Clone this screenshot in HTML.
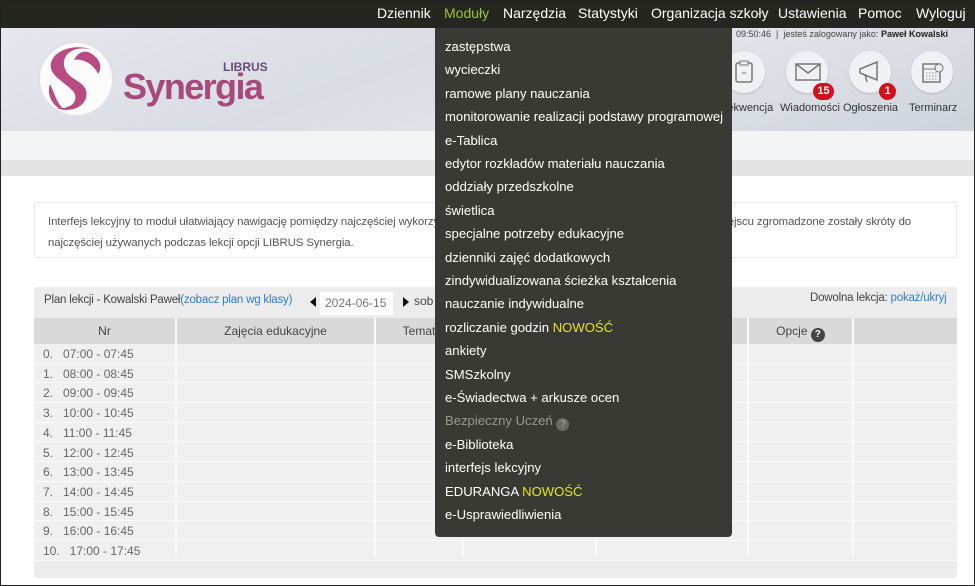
<!DOCTYPE html>
<html><head><meta charset="utf-8">
<style>
*{box-sizing:border-box;margin:0;padding:0}
body{width:975px;height:586px;overflow:hidden;position:relative;font-family:"Liberation Sans",Arial,sans-serif;background:#fff}
.abs{position:absolute}
#top{left:0;top:0;width:975px;height:28px;background:#262621}
#top span{position:absolute;top:5px;color:#fff;font-size:14px}
#hdr{left:0;top:28px;width:975px;height:103px;background:linear-gradient(160deg,#e6e8ee 0%,#d9dce4 40%,#e2e4ea 60%,#cfd3dc 100%)}
#band1{left:0;top:131px;width:975px;height:29px;background:#f3f4f6}
#band2{left:0;top:160px;width:975px;height:16px;background:#e4e4e4}
.ic{width:42px;height:42px;border-radius:50%;background:#f0f1f4;top:51px;box-shadow:0 1px 2px rgba(0,0,0,.15)}
.lbl{font-size:11px;color:#333;top:102px}
.badge{background:#d0101b;color:#fff;font-size:11px;font-weight:bold;border-radius:9px;height:17px;line-height:17px;text-align:center;top:83px}
#info{left:34px;top:202px;width:923px;height:56px;border:1px solid #e6e6e6;border-radius:3px;font-size:11.4px;color:#555;padding:9px 13px;line-height:21px;letter-spacing:-0.1px}
#plan{left:34px;top:287px;width:923px;height:291px;background:#ececec;border-radius:3px}
.row{left:34px;width:923px;height:19.7px;border-bottom:1px solid #fafafa;font-size:12px;color:#666}
.th{top:318px;height:26px;background:#d9d9d9;font-size:12px;color:#444;text-align:center;line-height:26px}
.vl{top:318px;width:2px;height:238px;background:#fafafa}
#dd{left:435px;top:28px;width:297px;height:509px;background:#3a3a35;border-radius:0 0 4px 4px}
#dd div{position:absolute;left:10px;color:#fff;font-size:13.1px;white-space:nowrap}
.new{color:#e4e51b}
#frame{left:0;top:0;width:975px;height:586px;border:1px solid #222;pointer-events:none}
</style></head><body>
<div id="top" class="abs">
<span style="left:377px">Dziennik</span>
<span style="left:444px;color:#9cc43a">Moduły</span>
<span style="left:503px">Narzędzia</span>
<span style="left:578px">Statystyki</span>
<span style="left:651px">Organizacja szkoły</span>
<span style="left:778px">Ustawienia</span>
<span style="left:858px">Pomoc</span>
<span style="left:916px">Wyloguj</span>
</div>
<div id="hdr" class="abs"></div>
<div class="abs" style="left:736px;top:29px;font-size:9px;color:#444">09:50:46 &nbsp;| &nbsp;jesteś zalogowany jako: <b style="color:#222">Paweł Kowalski</b></div>
<svg class="abs" style="left:36px;top:38px" width="80" height="82" viewBox="0 0 80 82">
<circle cx="40" cy="41" r="37" fill="#fbfbfc" stroke="#e0e0e6" stroke-width="2"/>
<path d="M56 12 C38 6 22 18 30 33 C36 44 54 44 50 60 C46 72 30 74 20 70 C38 72 44 60 36 52 C26 42 10 36 16 22 C22 10 42 6 56 12Z" fill="#b84c82"/>
<path d="M52 14 C62 18 68 28 62 36 C58 26 46 20 38 22 C42 14 48 13 52 14Z" fill="#b84c82"/>
<path d="M14 46 C10 58 18 70 28 72 C20 64 18 54 14 46Z" fill="#b84c82"/>
</svg>
<div class="abs" style="left:223px;top:60px;font-size:12px;font-weight:bold;color:#6b4a7a">LIBRUS</div>
<div class="abs" style="left:123px;top:66px;font-size:36px;font-weight:bold;color:#a7497a;letter-spacing:-1.6px">Synergia</div>
<div class="abs ic" style="left:723px"></div>
<div class="abs ic" style="left:786px"></div>
<div class="abs ic" style="left:849px"></div>
<div class="abs ic" style="left:911px"></div>
<svg class="abs" style="left:733px;top:60px" width="22" height="24"><rect x="3" y="3" width="16" height="19" rx="2" fill="none" stroke="#777" stroke-width="1.5"/><rect x="7" y="1" width="8" height="4" fill="#eee" stroke="#777"/><line x1="9" y1="13" x2="13" y2="13" stroke="#777"/></svg>
<svg class="abs" style="left:795px;top:63px" width="26" height="18"><rect x="1" y="1" width="24" height="16" fill="none" stroke="#777" stroke-width="1.5"/><path d="M1 1 L13 10 L25 1" fill="none" stroke="#777" stroke-width="1.5"/></svg>
<svg class="abs" style="left:857px;top:60px" width="26" height="24"><path d="M3 9 L20 2 L20 20 L3 13Z M8 14 L10 22" fill="none" stroke="#777" stroke-width="1.5"/></svg>
<svg class="abs" style="left:921px;top:60px" width="24" height="24"><rect x="2" y="4" width="17" height="18" fill="none" stroke="#777" stroke-width="1.5"/><line x1="2" y1="9" x2="19" y2="9" stroke="#777"/><circle cx="18" cy="8" r="4" fill="#eee" stroke="#777"/><path d="M5 13h11M5 16h11M5 19h11" stroke="#999" stroke-dasharray="1.5 1.5"/></svg>
<div class="abs badge" style="left:813px;width:21px">15</div>
<div class="abs badge" style="left:879px;width:17px">1</div>
<div class="abs lbl" style="left:717px">Frekwencja</div>
<div class="abs lbl" style="left:780px">Wiadomości</div>
<div class="abs lbl" style="left:843px">Ogłoszenia</div>
<div class="abs lbl" style="left:909px">Terminarz</div>
<div id="band1" class="abs"></div>
<div id="band2" class="abs"></div>
<div id="info" class="abs">Interfejs lekcyjny to moduł ułatwiający nawigację pomiędzy najczęściej wykorzystywanymi modułami w trakcie trwania lekcji. W jednym miejscu zgromadzone zostały skróty do najczęściej używanych podczas lekcji opcji LIBRUS Synergia.</div>
<div id="plan" class="abs"></div>
<div class="abs" style="left:44px;top:294px;font-size:11.5px;color:#444;letter-spacing:-0.2px">Plan lekcji - Kowalski Paweł<span style="color:#2e7cc4">(zobacz plan wg klasy)</span></div>
<div class="abs" style="left:310px;top:297px;width:0;height:0;border-top:5px solid transparent;border-bottom:5px solid transparent;border-right:6px solid #111"></div>
<div class="abs" style="left:320px;top:292px;width:73px;height:23px;background:#fff;font-size:12px;color:#777;padding:4px 5px">2024-06-15</div>
<div class="abs" style="left:403px;top:297px;width:0;height:0;border-top:5px solid transparent;border-bottom:5px solid transparent;border-left:6px solid #111"></div>
<div class="abs" style="left:414px;top:294px;font-size:12px;color:#444">sob</div>
<div class="abs" style="left:810px;top:292px;font-size:11.5px;color:#444;letter-spacing:-0.2px">Dowolna lekcja: <span style="color:#2e7cc4">pokaż/ukryj</span></div>
<div class="abs th" style="left:34px;width:141px">Nr</div>
<div class="abs th" style="left:177px;width:197px">Zajęcia edukacyjne</div>
<div class="abs th" style="left:376px;width:86px">Temat</div>
<div class="abs th" style="left:464px;width:131px"></div>
<div class="abs th" style="left:597px;width:150px">Zaplanowane</div>
<div class="abs th" style="left:749px;width:103px">Opcje <span style="display:inline-block;width:14px;height:14px;border-radius:50%;background:#444;color:#fff;font-size:10px;line-height:14px;font-weight:bold;vertical-align:-2px">?</span></div>
<div class="abs th" style="left:854px;width:103px"></div>
<div class="abs" style="left:34px;top:344px;width:923px;height:216px;background:#f0f0f0"></div>
<div class="abs row" style="top:344px;padding:3px 9px">0. &nbsp; 07:00 - 07:45</div>
<div class="abs row" style="top:363.7px;padding:3px 9px">1. &nbsp; 08:00 - 08:45</div>
<div class="abs row" style="top:383.4px;padding:3px 9px">2. &nbsp; 09:00 - 09:45</div>
<div class="abs row" style="top:403.1px;padding:3px 9px">3. &nbsp; 10:00 - 10:45</div>
<div class="abs row" style="top:422.8px;padding:3px 9px">4. &nbsp; 11:00 - 11:45</div>
<div class="abs row" style="top:442.5px;padding:3px 9px">5. &nbsp; 12:00 - 12:45</div>
<div class="abs row" style="top:462.2px;padding:3px 9px">6. &nbsp; 13:00 - 13:45</div>
<div class="abs row" style="top:481.9px;padding:3px 9px">7. &nbsp; 14:00 - 14:45</div>
<div class="abs row" style="top:501.6px;padding:3px 9px">8. &nbsp; 15:00 - 15:45</div>
<div class="abs row" style="top:521.3px;padding:3px 9px">9. &nbsp; 16:00 - 16:45</div>
<div class="abs row" style="top:541px;padding:3px 9px">10. &nbsp; 17:00 - 17:45</div>
<div class="abs vl" style="left:175px"></div>
<div class="abs vl" style="left:374px"></div>
<div class="abs vl" style="left:462px"></div>
<div class="abs vl" style="left:595px"></div>
<div class="abs vl" style="left:747px"></div>
<div class="abs vl" style="left:852px"></div>
<div id="dd" class="abs">
<div style="top:11px">zastępstwa</div>
<div style="top:34.4px">wycieczki</div>
<div style="top:57.8px">ramowe plany nauczania</div>
<div style="top:81.2px">monitorowanie realizacji podstawy programowej</div>
<div style="top:104.6px">e-Tablica</div>
<div style="top:128px">edytor rozkładów materiału nauczania</div>
<div style="top:151.4px">oddziały przedszkolne</div>
<div style="top:174.8px">świetlica</div>
<div style="top:198.2px">specjalne potrzeby edukacyjne</div>
<div style="top:221.6px">dzienniki zajęć dodatkowych</div>
<div style="top:245px">zindywidualizowana ścieżka kształcenia</div>
<div style="top:268.4px">nauczanie indywidualne</div>
<div style="top:291.8px">rozliczanie godzin <span class="new">NOWOŚĆ</span></div>
<div style="top:315.2px">ankiety</div>
<div style="top:338.6px">SMSzkolny</div>
<div style="top:362px">e-Świadectwa + arkusze ocen</div>
<div style="top:385.4px;color:#9a9a95">Bezpieczny Uczeń <span style="display:inline-block;width:13px;height:13px;border-radius:50%;background:#6a6a66;color:#aaa;font-size:10px;text-align:center;line-height:13px;vertical-align:-2px">?</span></div>
<div style="top:408.8px">e-Biblioteka</div>
<div style="top:432.2px">interfejs lekcyjny</div>
<div style="top:455.6px">EDURANGA <span class="new">NOWOŚĆ</span></div>
<div style="top:479px">e-Usprawiedliwienia</div>
</div>
<div id="frame" class="abs"></div>
</body></html>
